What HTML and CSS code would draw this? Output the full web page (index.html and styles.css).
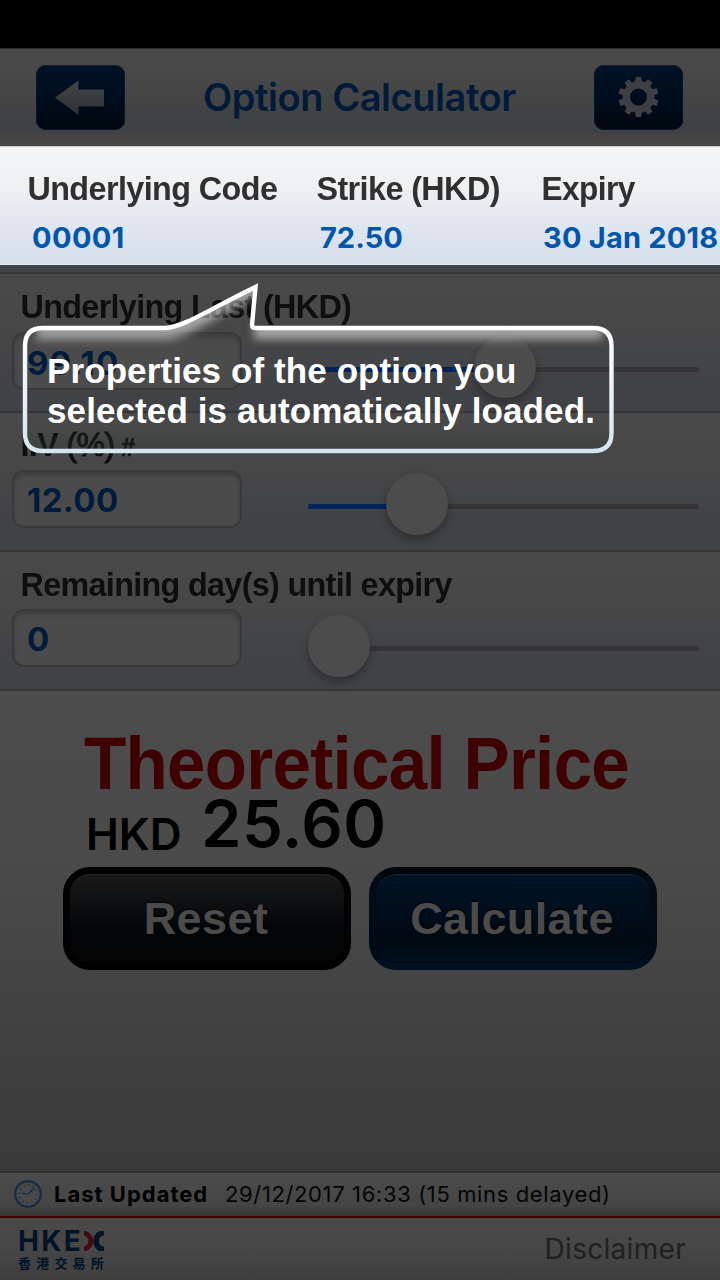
FILE: index.html
```html
<!DOCTYPE html>
<html lang="en">
<head>
<meta charset="utf-8">
<title>Option Calculator</title>
<link rel="stylesheet" href="styles.css">
</head>
<body>
<div class="screen">
  <div class="status"></div>
  <header class="header">
    <div class="navbtn">
      <svg width="89" height="65" viewBox="0 0 89 65"><defs><linearGradient id="ig" x1="0" y1="0" x2="0" y2="1"><stop offset="0" stop-color="#464646"/><stop offset="1" stop-color="#2c2f34"/></linearGradient></defs><path d="M19 32.500L42.500 15.500V24.500H68V41.500H42.500V50Z" fill="url(#ig)"/></svg>
    </div>
    <h1 class="title">Option Calculator</h1>
    <div class="navbtn">
      <svg width="89" height="65" viewBox="0 0 89 65">
        <g transform="translate(44.500 32)">
          <circle r="12.300" fill="none" stroke="#3d3f42" stroke-width="7.500"/>
          <g fill="#3f4144">
            <path id="t" d="M-3.200-15L-2.800-20H2.800L3.200-15Z"/>
            <use href="#t" transform="rotate(36)"/><use href="#t" transform="rotate(72)"/><use href="#t" transform="rotate(108)"/><use href="#t" transform="rotate(144)"/><use href="#t" transform="rotate(180)"/><use href="#t" transform="rotate(216)"/><use href="#t" transform="rotate(252)"/><use href="#t" transform="rotate(288)"/><use href="#t" transform="rotate(324)"/>
          </g>
        </g>
      </svg>
    </div>
  </header>

  <section class="summary">
    <div class="col"><div class="label dark">Underlying Code</div><div class="val v-code">00001</div></div>
    <div class="col"><div class="label dark">Strike (HKD)</div><div class="val v-strike">72.50</div></div>
    <div class="col"><div class="label dark l-exp">Expiry</div><div class="val v-exp">30 Jan 2018</div></div>
  </section>
  <div class="gap"></div>

  <section class="row first">
    <div class="label">Underlying Last (HKD)</div>
    <div class="controls"><div class="input">99.10</div><div class="slider s1"><div class="fill"></div><div class="knob"></div></div></div>
  </section>
  <section class="row second">
    <div class="label">I.V <span class="thin">(%)</span><span class="hash">#</span></div>
    <div class="controls"><div class="input">12.00</div><div class="slider s2"><div class="fill"></div><div class="knob"></div></div></div>
  </section>
  <section class="row">
    <div class="label">Remaining day(s) until expiry</div>
    <div class="controls"><div class="input">0</div><div class="slider s3"><div class="fill"></div><div class="knob"></div></div></div>
  </section>

  <main class="result">
    <h2 class="theo">Theoretical Price</h2>
    <div class="price"><span class="cur">HKD</span><span class="amount">25.60</span></div>
    <div class="buttons"><div class="btn reset"><span>Reset</span></div><div class="btn calc"><span>Calculate</span></div></div>
  </main>

  <div class="updated">
    <svg class="clock" width="30" height="30" viewBox="0 0 30 30"><circle cx="15" cy="15" r="12.800" fill="#474a4d" stroke="#1b2c45" stroke-width="2.400"/><circle cx="15" cy="15" r="9" fill="none" stroke="#25282d" stroke-width="1.500" stroke-dasharray="1.200 3.512"/><path d="M9 14L15 15.500L21.500 8.500" fill="none" stroke="#182b4a" stroke-width="1.300"/><path d="M14.500 14.500L19 24" stroke="#5a3e30" stroke-width="1"/></svg>
    <span class="upd-label">Last Updated</span><span class="upd-time">29/12/2017 16:33 (15 mins delayed)</span>
  </div>
  <footer class="footer">
    <div class="logo">
      <div class="brand"><span class="hke">HKE</span><svg width="20" height="20" viewBox="0 0 20 20"><path d="M0 0C5 0 9 4.500 9.500 10C9 15.500 5 20 0 20V15.500C2.500 15 4.500 13 4.500 10S2.500 5 0 4.500Z" fill="#48080f"/><path d="M20 0H17C12.500 0 9.500 5 9.500 10S12.500 20 17 20H20V15.500C16.500 15.500 15 13 15 10S16.500 4.500 20 4.500Z" fill="#001426"/></svg></div>
      <div class="cn">香港交易所</div>
    </div>
    <div class="disc">Disclaimer</div>
  </footer>

  <div class="callout">
    <svg width="600" height="180" viewBox="20 280 600 180">
      <defs>
        <linearGradient id="edge" gradientUnits="userSpaceOnUse" x1="0" y1="330" x2="0" y2="452"><stop offset="0" stop-color="#fff"/><stop offset="1" stop-color="#d5e5ee"/></linearGradient>
        <linearGradient id="base" gradientUnits="userSpaceOnUse" x1="0" y1="326" x2="0" y2="452"><stop offset=".8" stop-color="#303838" stop-opacity="0"/><stop offset="1" stop-color="#303838" stop-opacity=".4"/></linearGradient>
        <filter id="soft" filterUnits="userSpaceOnUse" x="0" y="270" width="640" height="200"><feGaussianBlur stdDeviation="4"/></filter>
        <clipPath id="inside"><path d="M42 328H165C182 327 211 308 256 286L252 328H593Q611.500 328 611.500 346V433Q611.500 451 593 451H43Q25 451 25 433V346Q25 328 42 328Z"/></clipPath>
      </defs>
      <g clip-path="url(#inside)">
        <path d="M25 328H612V452H25Z" fill="url(#base)"/>
        <path d="M36 331H165C184 330 211 310 256 286M254 331H602" fill="none" stroke="#fff" stroke-width="17" opacity=".5" filter="url(#soft)"/>
      </g>
      <path d="M43 328H165C184 327 208 310 255.500 287L252 325Q252 328 255 328H593Q611.500 328 611.500 346V433Q611.500 451 593 451H43Q25 451 25 433V346Q25 328 43 328Z" fill="none" stroke="url(#edge)" stroke-width="4.400"/>
    </svg>
    <p class="tip">Properties of the option you<br>selected is automatically loaded.</p>
  </div>
</div>
</body>
</html>
```
FILE: styles.css
```css
* { box-sizing: border-box; }
body { margin: 0; background: #000; }
.screen { position: relative; width: 720px; height: 1280px; overflow: hidden; display: flex; flex-direction: column; font-family: Inter, "Liberation Sans", sans-serif; white-space: nowrap; }
.status { height: 48px; background: #000; }
.header { height: 98px; padding: 0 37px 0 36px; display: flex; align-items: center; justify-content: space-between; background: linear-gradient(#4a4a4a, #484848 20%, #404143 75%, #404143 85%, #464646 92%, #474747); border-top: 1px solid #2b2b2b; }
.navbtn { width: 89px; height: 65px; border-radius: 10px; background: linear-gradient(#001226, #000d1c 50%, #00060e); box-shadow: inset 0 1px #181c20, inset 0 0 0 1px #04172a; }
.navbtn svg { display: block; }
.title { margin: -1px 0 0; font-size: 38px; font-weight: 600; letter-spacing: -.45px; line-height: 46px; color: #001b39; }
.summary { height: 119px; padding: 21px 0 0 26px; display: grid; grid-template-columns: 289px 225px 1fr; align-content: start; background: linear-gradient(#f4f5f6, #eef0f2 35%, #dde4ee 75%, #d5deea); border-top: 1px solid #ccc; border-bottom: 1px solid #dce8f2; }
.label { height: 40px; line-height: 40px; font-family: "Liberation Sans", sans-serif; font-size: 34px; font-weight: 700; letter-spacing: -.6px; color: #0e0e0e; transform: scaleX(.95); transform-origin: 0 0; padding-left: 1.500px; }
.label.dark { color: #303030; }
.l-exp { transform: scaleX(.93); }
.val { margin-top: 12px; height: 36px; line-height: 36px; font-size: 29px; font-weight: 700; color: #0055ad; letter-spacing: .4px; padding-left: 6px; }
.v-strike { padding-left: 5px; letter-spacing: 0; }
.v-exp { padding-left: 3px; letter-spacing: .2px; }
.gap { height: 7px; background: #404347; }
.row { height: 139px; padding: 12px 0 0 12px; border-top: 2px solid #333639; background: linear-gradient(#494949, #474747 35%, #414347 75%, #404246); }
.row .label { padding-left: 9px; letter-spacing: -.7px; }
.second { padding-top: 11px; }
.thin { font-weight: 400; -webkit-text-stroke: 1px #0e0e0e; }
.hash { font-size: 26px; margin-left: 7px; -webkit-text-stroke: .7px #0e0e0e; }
.controls { margin-top: 5px; display: flex; align-items: flex-start; }
.first .controls, .second .controls { margin-top: 6px; }
.input { width: 230px; height: 58px; padding-left: 13px; border: 2px solid #393939; border-radius: 12px; background: #4b4b4b; box-shadow: inset 0 3px 4px #3c3c3c; line-height: 57px; font-size: 33px; font-weight: 700; letter-spacing: .4px; color: #001c3a; }
.first .input { letter-spacing: 1.200px; line-height: 59px; }
.slider { position: relative; width: 391px; height: 5px; margin: 34px 0 0 66px; border-radius: 3px; background: #353535; }
.s1 { margin-top: 35px; }
.s3 { margin-top: 37px; }
.fill { height: 5px; border-radius: 3px; background: #00235a; }
.s1 .fill { width: 197px; }
.s2 .fill { width: 109px; }
.s3 .fill { width: 0; }
.knob { position: absolute; top: -31px; width: 62px; height: 62px; border-radius: 50%; background: #4c4c4c; box-shadow: 0 5px 10px rgba(0,0,0,.3); }
.s1 .knob { left: 166px; }
.s2 .knob { left: 78px; }
.s3 .knob { left: 0; }
.result { height: 482px; padding-top: 43px; border-top: 2px solid #333539; background: linear-gradient(#4c4c4c, #4a4a4a 35%, #3a3a3a); }
.theo { margin: 0 0 0 84px; height: 69px; line-height: 60px; font-family: "Liberation Sans", sans-serif; font-size: 74px; font-weight: 700; letter-spacing: -.75px; color: #3f0000; transform: scaleX(.934); transform-origin: 0 0; }
.price { height: 64px; margin-left: 86px; display: flex; align-items: flex-start; color: #000; }
.cur { line-height: 62px; font-size: 44px; font-weight: 600; width: 115px; }
.amount { line-height: 41px; font-size: 65px; font-weight: 600; letter-spacing: .5px; }
.buttons { display: flex; gap: 18px; margin-left: 63px; }
.btn { width: 288px; height: 103px; border-radius: 27px; display: flex; align-items: center; justify-content: center; font-family: "Liberation Sans", sans-serif; font-size: 45px; font-weight: 700; letter-spacing: .4px; color: #4b4b4b; border: 7px solid #000; text-shadow: 0 -1px 1px #000; }
.btn span { line-height: 50px; margin-right: 2px; }
.reset { background: linear-gradient(#191919, #0c0e10 35%, #020508 65%, #040404); box-shadow: inset 0 1px #252525; }
.calc { border-color: #00060c #000b16 #001020; background: linear-gradient(#001226, #000e1c 40%, #000810 75%, #001122); box-shadow: inset 0 1px 1px #17283a, inset 0 -1px 2px #000408; }
.updated { height: 45px; border-top: 2px solid #303030; padding: 0 0 2px 13px; display: flex; align-items: center; background: linear-gradient(#4b4b4b, #454545 75%, #373737); font-size: 22px; color: #000; }
.upd-label { margin-left: 11px; width: 171px; font-weight: 700; letter-spacing: 1px; }
.upd-time { color: #050505; letter-spacing: .63px; }
.footer { height: 64px; border-top: 2px solid #440302; padding: 13px 34px 0 18px; display: flex; justify-content: space-between; background: linear-gradient(#494949, #464646 50%, #3e3e3e); }
.brand { display: flex; height: 20px; color: #001426; }
.hke { width: 66px; font-size: 28px; font-weight: 700; letter-spacing: 2.400px; line-height: 20px; }
.cn { margin-top: 4px; font-family: "Noto Sans CJK TC", sans-serif; font-size: 13px; font-weight: 700; line-height: 16px; letter-spacing: 5.200px; color: #001426; }
.disc { font-size: 28px; line-height: 36px; letter-spacing: .3px; color: #202020; }
.callout { position: absolute; left: 20px; top: 280px; width: 600px; height: 180px; }
.callout svg { position: absolute; left: 0; top: 0; }
.tip { position: relative; margin: 0; padding: 71px 0 0 27px; font-family: "Liberation Sans", sans-serif; font-size: 35px; line-height: 39.500px; letter-spacing: .1px; font-weight: 700; color: #fff; }
```
